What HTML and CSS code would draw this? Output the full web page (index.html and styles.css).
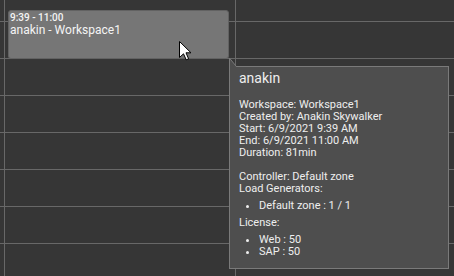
FILE: index.html
```html
<!DOCTYPE html>
<html>
<head>
<meta charset="utf-8">
<link rel="stylesheet" href="styles.css">
</head>
<body>
<div class="cal">
  <div class="cell c0"></div><div class="cell c1"></div><div class="cell"></div>
  <div class="cell c0"></div><div class="cell c1"></div><div class="cell"></div>
  <div class="cell c0"></div><div class="cell c1"></div><div class="cell"></div>
  <div class="cell c0"></div><div class="cell c1"></div><div class="cell"></div>
  <div class="cell c0"></div><div class="cell c1"></div><div class="cell"></div>
  <div class="cell c0"></div><div class="cell c1"></div><div class="cell"></div>
  <div class="cell c0"></div><div class="cell c1"></div><div class="cell"></div>
  <div class="cell c0"></div><div class="cell c1"></div><div class="cell"></div>

  <div class="event">
    <div class="ev-time">9:39 - 11:00</div>
    <div class="ev-title">anakin - Workspace1</div>
  </div>

  <svg class="cursor" width="13" height="20" viewBox="0 0 13 20">
    <path d="M0.5 0.5 L0.5 16.5 L4.5 12.8 L7.2 18.8 L9.6 17.8 L7 11.8 L12 11.8 Z" fill="#ffffff" stroke="#000000" stroke-width="1" stroke-linejoin="miter"/>
  </svg>

  <div class="tip">
    <svg class="tip-arrow" width="9" height="10" viewBox="0 0 9 10">
      <polygon points="0.5,0 0.5,10 8.5,10" fill="#4e4e4e"/>
      <line x1="0.5" y1="0" x2="0.5" y2="10" stroke="#7a7a7a" stroke-width="1"/>
      <line x1="0.8" y1="0.5" x2="7.8" y2="9" stroke="#7a7a7a" stroke-width="1"/>
    </svg>
    <div class="tip-title">anakin</div>
    <div class="tip-body">
      Workspace: Workspace1<br>
      Created by: Anakin Skywalker<br>
      Start: 6/9/2021 9:39 AM<br>
      End: 6/9/2021 11:00 AM<br>
      Duration: 81min<br>
      <br>
      Controller: Default zone<br>
      Load Generators:
      <ul class="tip-list">
        <li>Default zone : 1 / 1</li>
      </ul>
      License:
      <ul class="tip-list">
        <li>Web : 50</li>
        <li>SAP : 50</li>
      </ul>
    </div>
  </div>
</div>
</body>
</html>
```

FILE: styles.css
```css
html, body {
  margin: 0;
  padding: 0;
  background: #363636;
  width: 454px;
  height: 276px;
  overflow: hidden;
  font-family: Roboto, "Liberation Sans", sans-serif;
}

.cal {
  position: relative;
  display: grid;
  grid-template-columns: 5px 231px 1fr;
  grid-template-rows: 22px repeat(7, 37px);
  width: 454px;
  height: 276px;
  overflow: hidden;
}

.cell {
  box-sizing: border-box;
  border-bottom: 1px solid #686868;
}

.c0, .c1 {
  border-right: 1px solid #686868;
}

.event {
  position: absolute;
  left: 8px;
  top: 10px;
  width: 221px;
  height: 49px;
  box-sizing: border-box;
  background: #767676;
  border: 1px solid #626262;
  border-radius: 3px;
  padding: 1px 0 0 1px;
  color: #f4f4f4;
}

.ev-time {
  font-size: 10px;
  font-weight: 500;
  line-height: 11px;
}

.ev-title {
  font-size: 12px;
  line-height: 15px;
}

.cursor {
  position: absolute;
  left: 179px;
  top: 41px;
}

.tip {
  position: absolute;
  left: 229px;
  top: 66px;
  width: 220px;
  box-sizing: border-box;
  background: #4e4e4e;
  border: 1px solid #7a7a7a;
  padding: 3px 9px 5px 9px;
  color: #eeeeee;
}

.tip-arrow {
  position: absolute;
  left: -1px;
  top: -9px;
}

.tip-title {
  font-size: 14px;
  line-height: 16px;
  margin-bottom: 13px;
}

.tip-body {
  font-size: 11px;
  line-height: 12px;
}

.tip-list {
  margin: 5px 0;
  padding-left: 20px;
}
```
